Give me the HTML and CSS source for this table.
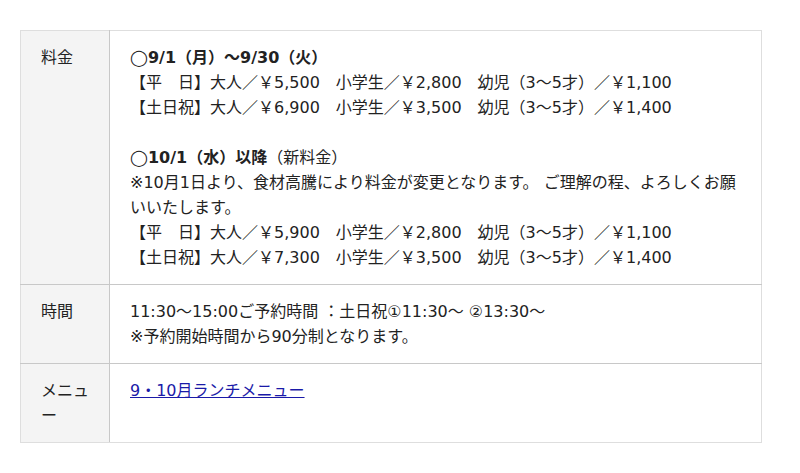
FILE: index.html
```html
<!DOCTYPE html>
<html lang="ja">
<head>
<meta charset="utf-8">
<title>料金</title>
<link rel="stylesheet" href="styles.css">
</head>
<body>
<div class="wrap">
  <table class="info">
    <tr>
      <th>料金</th>
      <td>◯<strong>9/1（月）～9/30（火）</strong><br>【平　日】大人／￥5,500　小学生／￥2,800　幼児（3～5才）／￥1,100<br>【土日祝】大人／￥6,900　小学生／￥3,500　幼児（3～5才）／￥1,400<br><br>◯<strong>10/1（水）以降</strong>（新料金）<br>※10月1日より、食材高騰により料金が変更となります。 ご理解の程、よろしくお願いいたします。<br>【平　日】大人／￥5,900　小学生／￥2,800　幼児（3～5才）／￥1,100<br>【土日祝】大人／￥7,300　小学生／￥3,500　幼児（3～5才）／￥1,400</td>
    </tr>
    <tr>
      <th>時間</th>
      <td>11:30～15:00ご予約時間 ：土日祝①11:30～ ②13:30～<br>※予約開始時間から90分制となります。</td>
    </tr>
    <tr>
      <th>メニュー</th>
      <td class="tall"><a href="#">9・10月ランチメニュー</a></td>
    </tr>
  </table>
</div>
</body>
</html>
```

FILE: styles.css
```css
html, body {
  margin: 0;
  padding: 0;
  background: #fff;
}
body {
  font-family: "DejaVu Sans", "Noto Sans CJK JP", sans-serif;
  font-size: 16px;
  line-height: 25px;
  color: #222;
}
.wrap {
  padding: 30px 0 0 20px;
}
.info {
  width: 742px;
  border-collapse: collapse;
  border: 1px solid #dedede;
}
.info th,
.info td {
  text-align: left;
  vertical-align: top;
  padding: 14px 20px 14px;
  border-bottom: 1px solid #c8c8c8;
}
.info tr:last-child th,
.info tr:last-child td {
  border-bottom: 1px solid #dedede;
}
.info th {
  width: 48px;
  font-weight: normal;
  background: #f4f4f4;
  border-right: 1px solid #c8c8c8;
}
.info td.tall {
  height: 50px;
}
.info a {
  color: #1a1aa8;
  text-decoration: underline;
}
```
